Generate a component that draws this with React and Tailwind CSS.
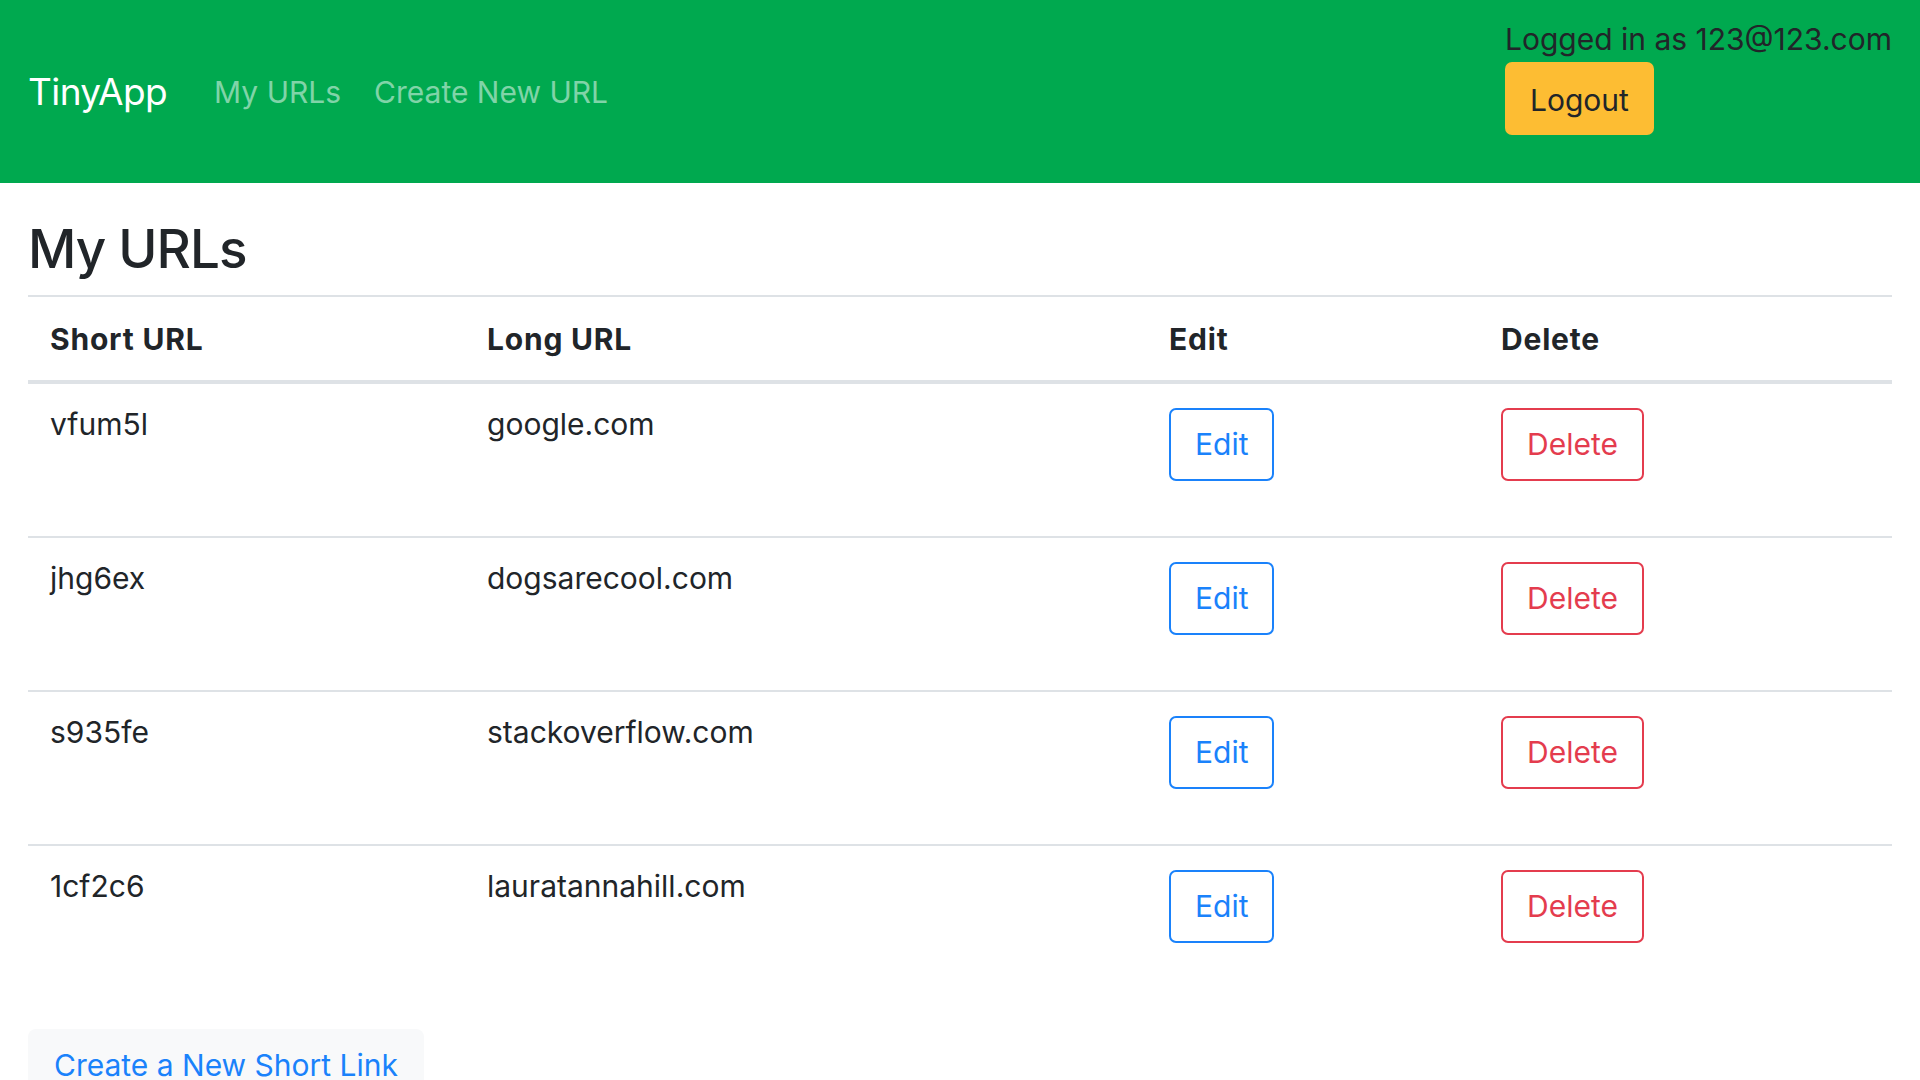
import React from "react";

const urls = [
  { short: "vfum5l", long: "google.com" },
  { short: "jhg6ex", long: "dogsarecool.com" },
  { short: "s935fe", long: "stackoverflow.com" },
  { short: "1cf2c6", long: "lauratannahill.com" },
];

const App = () => {
  return (
    <div className="min-h-screen bg-white text-[#212529] font-['Inter','Liberation_Sans',sans-serif]">
      {/* Navbar */}
      <nav className="h-[183px] bg-[#00a94f] px-[28px] flex justify-between">
        <div className="flex items-center">
          <a className="text-[37px] tracking-[-0.6px] text-white mr-[47px] leading-none">TinyApp</a>
          <a className="text-[30px] text-[#80d4a8] mr-[33px] leading-none">My URLs</a>
          <a className="text-[30px] text-[#80d4a8] leading-none">Create New URL</a>
        </div>
        <div className="flex flex-col items-start pt-[17px]">
          <span className="text-[30px] leading-[45px] text-[#212529]">
            Logged in as 123@123.com
          </span>
          <button className="h-[73px] px-[25px] pt-[3px] rounded-[7px] bg-[#fdbd33] text-[30px] text-[#212529]">
            Logout
          </button>
        </div>
      </nav>

      {/* Main */}
      <main className="px-[28px] pt-[35px]">
        <h3 className="text-[53px] tracking-[-1px] font-medium leading-[1.2] mb-[13px]">My URLs</h3>

        <table className="w-full table-fixed border-collapse text-[30px] leading-[43px]">
          <thead>
            <tr className="border-t-2 border-[#dee2e6]">
              <th className="w-[437px] text-left font-bold tracking-[0.8px] px-[22px] pt-[21px] pb-[19px] border-b-4 border-[#dee2e6]">
                Short URL
              </th>
              <th className="w-[682px] text-left font-bold tracking-[0.8px] px-[22px] pt-[21px] pb-[19px] border-b-4 border-[#dee2e6]">
                Long URL
              </th>
              <th className="w-[332px] text-left font-bold tracking-[0.8px] px-[22px] pt-[21px] pb-[19px] border-b-4 border-[#dee2e6]">
                Edit
              </th>
              <th className="text-left font-bold tracking-[0.8px] px-[22px] pt-[21px] pb-[19px] border-b-4 border-[#dee2e6]">
                Delete
              </th>
            </tr>
          </thead>
          <tbody>
            {urls.map((u, i) => (
              <tr key={u.short} className={i > 0 ? "border-t-2 border-[#dee2e6]" : ""}>
                <td className="align-top px-[22px] pt-[19px] pb-[23px]">{u.short}</td>
                <td className="align-top px-[22px] pt-[19px] pb-[23px]">{u.long}</td>
                <td className="align-top px-[22px] pt-[24px] pb-[22px]">
                  <form className="mb-[33px]">
                    <button
                      type="button"
                      className="h-[73px] px-[24px] border-2 border-[#1a82fb] rounded-[7px] text-[#1a82fb] text-[30px]"
                    >
                      Edit
                    </button>
                  </form>
                </td>
                <td className="align-top px-[22px] pt-[24px] pb-[22px]">
                  <form className="mb-[33px]">
                    <button
                      type="button"
                      className="h-[73px] px-[24px] border-2 border-[#e43c4e] rounded-[7px] text-[#e43c4e] text-[30px]"
                    >
                      Delete
                    </button>
                  </form>
                </td>
              </tr>
            ))}
          </tbody>
        </table>

        <div className="mt-[31px] inline-block bg-[#f8f9fa] rounded-[8px] px-[26px] pt-[14px] pb-[24px]">
          <a className="text-[30px] leading-[45px] text-[#1a82fb]">Create a New Short Link</a>
        </div>
      </main>
    </div>
  );
};

export default App;
